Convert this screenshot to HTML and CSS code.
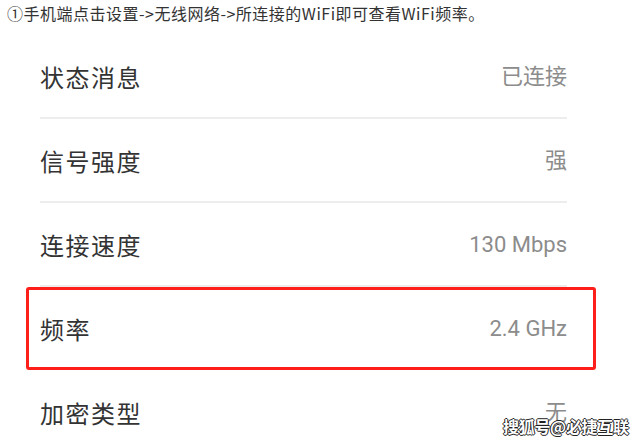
FILE: index.html
```html
<!DOCTYPE html>
<html lang="zh-CN">
<head>
<meta charset="utf-8">
<link rel="stylesheet" href="styles.css">
</head>
<body>
<div class="page">
  <p class="intro">①手机端点击设置-&gt;无线网络-&gt;所连接的WiFi即可查看WiFi频率。</p>
  <ul class="list">
    <li class="row"><span class="label">状态消息</span><span class="value">已连接</span></li>
    <li class="row"><span class="label">信号强度</span><span class="value">强</span></li>
    <li class="row"><span class="label">连接速度</span><span class="value">130 Mbps</span></li>
    <li class="row row-hl"><span class="label">频率</span><span class="value">2.4 GHz</span><span class="hl-box"></span></li>
    <li class="row"><span class="label">加密类型</span><span class="value">无</span></li>
  </ul>
  <div class="watermark">搜狐号@必捷互联</div>
</div>
</body>
</html>
```
FILE: styles.css
```css
html, body {
  margin: 0;
  padding: 0;
  background: #ffffff;
}
.page {
  position: relative;
  width: 642px;
  height: 442px;
  overflow: hidden;
  font-family: "Noto Sans CJK SC", "Noto Sans", sans-serif;
}
.intro {
  margin: 0;
  padding: 2px 0 0 7px;
  height: 35px;
  box-sizing: border-box;
  font-size: 16px;
  line-height: 22px;
  color: #333333;
  letter-spacing: 0.5px;
}
.list {
  list-style: none;
  margin: 0 0 0 40px;
  padding: 0;
  width: 527px;
}
.row {
  position: relative;
  display: flex;
  align-items: center;
  justify-content: space-between;
  height: 82px;
  border-bottom: 2px solid #ededed;
}
.row-hl {
  border-bottom-color: transparent;
}
.label {
  font-size: 24px;
  line-height: 30px;
  padding-top: 2px;
  color: #333333;
  letter-spacing: 1.5px;
}
.value {
  font-family: Roboto, "Noto Sans CJK SC", sans-serif;
  font-size: 22px;
  line-height: 30px;
  padding-top: 2px;
  color: #8c8c8c;
}
.hl-box {
  position: absolute;
  left: -14px;
  right: -29px;
  top: 0;
  bottom: -1px;
  border: 3px solid #ff1f1a;
  border-radius: 3px;
}
.watermark {
  position: absolute;
  left: 503px;
  top: 415px;
  font-size: 16px;
  font-weight: bold;
  line-height: 22px;
  color: #ffffff;
  letter-spacing: -0.3px;
  text-shadow: 1px 0 0 #222, -1px 0 0 #222, 0 1px 0 #222, 0 -1px 0 #222;
}
```
